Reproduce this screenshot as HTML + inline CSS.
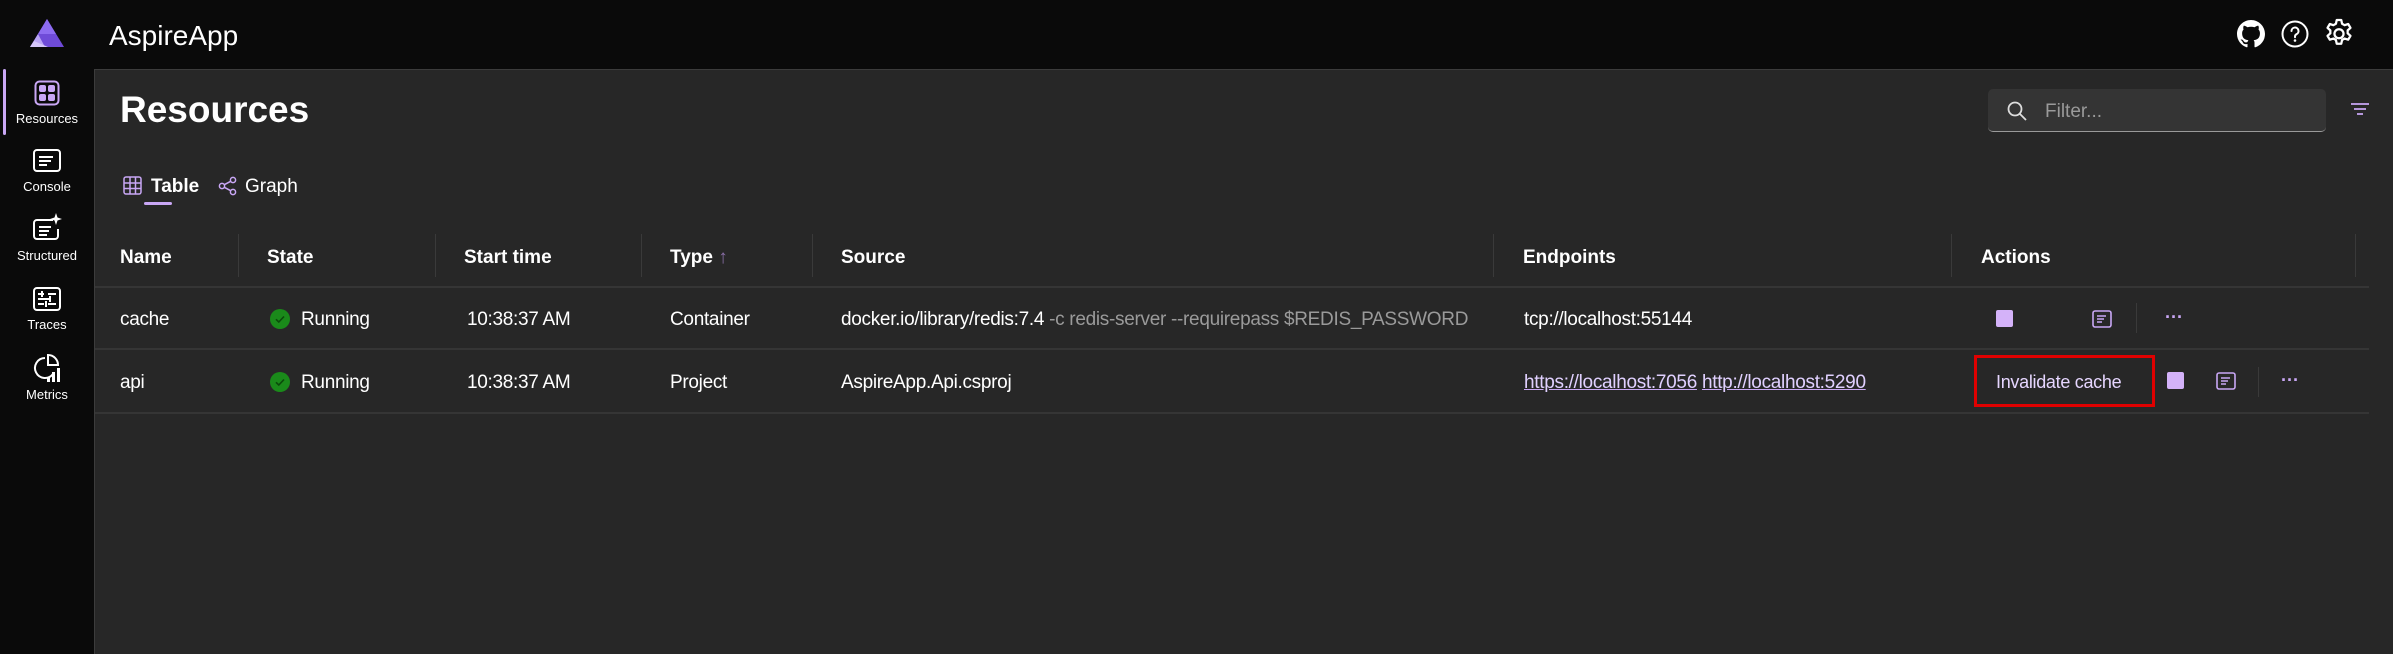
<!DOCTYPE html>
<html><head><meta charset="utf-8"><style>
*{margin:0;padding:0;box-sizing:border-box}
body{width:2393px;height:654px;background:#0a0a0a;font-family:"Liberation Sans",sans-serif;color:#fff;position:relative;overflow:hidden}
.a{position:absolute}
.content{left:94px;top:69px;right:0;bottom:0;background:#272727;border-top:1px solid #3c3c3c;border-left:1px solid #3c3c3c}
.nav{width:94px;text-align:center;font-size:13px;color:#fff;left:0}
.hd{font-weight:bold;font-size:19px;top:247px}
.cell{font-size:19px;letter-spacing:-0.3px}
.sep{width:1px;background:#3a3a3a;top:234px;height:43px}
.hr{left:95px;width:2274px;height:2px;background:#353535}
.lnk{color:#e0d0ff;text-decoration:underline;text-decoration-color:#c9a7f5}
.stop{width:17px;height:17px;background:#d4b2f9;border-radius:2px}
</style></head><body>
<div class="a content"></div>
<svg class="a" style="left:28px;top:17px" width="38" height="32" viewBox="0 0 38 32"><polygon points="19,2 36,30 2,30" fill="#6f4bd8"/><polygon points="19,2 28,17 10,17" fill="#8d6cf0"/><polygon points="10,17 17,30 2,30" fill="#b9a4f5"/><polygon points="6,24 20,30 2,30" fill="#d5c6fa"/></svg>
<div class="a" style="left:109px;top:20px;font-size:28px">AspireApp</div>
<svg class="a" style="left:2237px;top:20px" width="28" height="28" viewBox="0 0 16 16"><path fill="#fff" d="M8 0C3.58 0 0 3.58 0 8c0 3.54 2.29 6.53 5.47 7.59.4.07.55-.17.55-.38 0-.19-.01-.82-.01-1.49-2.01.37-2.53-.49-2.69-.94-.09-.23-.48-.94-.82-1.13-.28-.15-.68-.52-.01-.53.63-.01 1.08.58 1.23.82.72 1.21 1.87.87 2.33.66.07-.52.28-.87.51-1.07-1.78-.2-3.64-.89-3.64-3.95 0-.87.31-1.59.82-2.15-.08-.2-.36-1.02.08-2.12 0 0 .67-.21 2.2.82.64-.18 1.32-.27 2-.27.68 0 1.36.09 2 .27 1.53-1.04 2.2-.82 2.2-.82.44 1.1.16 1.92.08 2.12.51.56.82 1.27.82 2.15 0 3.07-1.87 3.75-3.65 3.95.29.25.54.73.54 1.48 0 1.07-.01 1.93-.01 2.2 0 .21.15.46.55.38A8.013 8.013 0 0 0 16 8c0-4.42-3.58-8-8-8z"/></svg>
<svg class="a" style="left:2281px;top:20px" width="28" height="28" viewBox="0 0 28 28"><circle cx="14" cy="14" r="12.5" fill="none" stroke="#fff" stroke-width="2"/><path d="M10.5 11a3.5 3.5 0 1 1 5 3.2c-1 .5-1.5 1.2-1.5 2.3v.8" fill="none" stroke="#fff" stroke-width="2" stroke-linecap="round"/><circle cx="14" cy="20.5" r="1.3" fill="#fff"/></svg>
<svg class="a" style="left:2323px;top:18px" width="32" height="32" viewBox="0 0 24 24"><path fill="none" stroke="#fff" stroke-width="1.7" stroke-linejoin="round" d="M10.3 1.5h3.4l.6 2.8 1.9 1.1 2.7-.9 1.7 2.9-2.1 1.9v2.2l2.1 1.9-1.7 2.9-2.7-.9-1.9 1.1-.6 2.8h-3.4l-.6-2.8-1.9-1.1-2.7.9-1.7-2.9 2.1-1.9V9.3L3.4 7.4l1.7-2.9 2.7.9 1.9-1.1z"/><circle cx="12" cy="11.8" r="3.4" fill="none" stroke="#fff" stroke-width="1.7"/></svg>
<div class="a" style="left:3px;top:69px;width:3px;height:66px;background:#c9a7f5;border-radius:2px"></div>
<svg class="a" style="left:34px;top:80px" width="26" height="26" viewBox="0 0 26 26"><rect x="1.5" y="1.5" width="23" height="23" rx="4" fill="none" stroke="#c9a7f5" stroke-width="2"/><rect x="5" y="5" width="7" height="7" rx="2" fill="#c9a7f5"/><rect x="14" y="5" width="7" height="7" rx="2" fill="#c9a7f5"/><rect x="5" y="14" width="7" height="7" rx="2" fill="#c9a7f5"/><rect x="14" y="14" width="7" height="7" rx="2" fill="#c9a7f5"/></svg>
<div class="a nav" style="top:111px">Resources</div>
<svg class="a" style="left:33px;top:149px" width="28" height="23" viewBox="0 0 28 23"><rect x="1" y="1" width="26" height="21" rx="3" fill="none" stroke="#fff" stroke-width="2"/><path d="M6 8h14M6 12h12M6 16h8" stroke="#fff" stroke-width="2"/></svg>
<div class="a nav" style="top:179px">Console</div>
<svg class="a" style="left:33px;top:213px" width="30" height="28" viewBox="0 0 30 28"><path d="M20 7H4a3 3 0 0 0-3 3v13a3 3 0 0 0 3 3h18a3 3 0 0 0 3-3v-7" fill="none" stroke="#fff" stroke-width="2"/><path d="M6 14h12M6 18h10M6 22h8" stroke="#fff" stroke-width="2"/><path d="M23 0l1.5 4.5L29 6l-4.5 1.5L23 12l-1.5-4.5L17 6l4.5-1.5z" fill="#fff"/></svg>
<div class="a nav" style="top:248px">Structured</div>
<svg class="a" style="left:33px;top:287px" width="28" height="24" viewBox="0 0 28 24"><rect x="1" y="1" width="26" height="22" rx="3" fill="none" stroke="#fff" stroke-width="2"/><path d="M5 7h6M15 7h8M9 4v6M5 12h12M17 9v6M5 17h6M15 17h8M13 14v6" stroke="#fff" stroke-width="2"/></svg>
<div class="a nav" style="top:317px">Traces</div>
<svg class="a" style="left:33px;top:353px" width="30" height="30" viewBox="0 0 30 30"><path d="M12 5a10 10 0 1 0 8 16" fill="none" stroke="#fff" stroke-width="2"/><path d="M15 2a10 10 0 0 1 10 10H15z" fill="none" stroke="#fff" stroke-width="2"/><rect x="14" y="24" width="3" height="5" fill="#fff"/><rect x="19" y="19" width="3" height="10" fill="#fff"/><rect x="24" y="15" width="3" height="14" fill="#fff"/></svg>
<div class="a nav" style="top:387px">Metrics</div>
<div class="a" style="left:120px;top:89px;font-size:37px;font-weight:bold">Resources</div>
<div class="a" style="left:1988px;top:89px;width:338px;height:43px;background:#343434;border-radius:5px;border-bottom:1px solid #9a9a9a"></div>
<svg class="a" style="left:2006px;top:100px" width="22" height="22" viewBox="0 0 22 22"><circle cx="9" cy="9" r="6.5" fill="none" stroke="#ddd" stroke-width="1.8"/><path d="M14 14l6 6" stroke="#ddd" stroke-width="1.8"/></svg>
<div class="a" style="left:2045px;top:101px;font-size:19px;color:#9a9a9a">Filter...</div>
<svg class="a" style="left:2350px;top:102px" width="20" height="16" viewBox="0 0 20 16"><path d="M1 2h18M4 7h12M7 12h6" stroke="#c9a7f5" stroke-width="1.8"/></svg>
<svg class="a" style="left:123px;top:176px" width="19" height="19" viewBox="0 0 19 19"><rect x="1" y="1" width="17" height="17" rx="2" fill="none" stroke="#c9a7f5" stroke-width="1.5"/><path d="M1 7h17M1 12.5h17M7 1v17M12.5 1v17" stroke="#c9a7f5" stroke-width="1.5"/></svg>
<div class="a" style="left:151px;top:176px;font-size:19px;font-weight:bold">Table</div>
<div class="a" style="left:144px;top:202px;width:28px;height:3px;background:#c9a7f5;border-radius:2px"></div>
<svg class="a" style="left:218px;top:176px" width="19" height="20" viewBox="0 0 19 20"><circle cx="4" cy="10" r="2.6" fill="none" stroke="#c9a7f5" stroke-width="1.5"/><circle cx="15" cy="4" r="2.6" fill="none" stroke="#c9a7f5" stroke-width="1.5"/><circle cx="15" cy="16" r="2.6" fill="none" stroke="#c9a7f5" stroke-width="1.5"/><path d="M6.3 8.7l6.4-3.4M6.3 11.3l6.4 3.4" stroke="#c9a7f5" stroke-width="1.5"/></svg>
<div class="a" style="left:245px;top:176px;font-size:19px">Graph</div>
<div class="a hd" style="left:120px">Name</div>
<div class="a sep" style="left:238px"></div>
<div class="a hd" style="left:267px">State</div>
<div class="a sep" style="left:435px"></div>
<div class="a hd" style="left:464px">Start time</div>
<div class="a sep" style="left:641px"></div>
<div class="a hd" style="left:670px">Type <span style="font-weight:normal;color:#8a6fa8">↑</span></div>
<div class="a sep" style="left:812px"></div>
<div class="a hd" style="left:841px">Source</div>
<div class="a sep" style="left:1493px"></div>
<div class="a hd" style="left:1523px">Endpoints</div>
<div class="a sep" style="left:1951px"></div>
<div class="a hd" style="left:1981px">Actions</div>
<div class="a sep" style="left:2355px"></div>
<div class="a hr" style="top:286px"></div>
<div class="a hr" style="top:348px"></div>
<div class="a hr" style="top:412px"></div>
<div class="a cell" style="left:120px;top:309px">cache</div>
<svg class="a" style="left:270px;top:309px" width="20" height="20" viewBox="0 0 20 20"><circle cx="10" cy="10" r="10" fill="#1a8a1a"/><path d="M6 10.3l2.8 2.7L14 7.5" fill="none" stroke="#0b4a0b" stroke-width="1.6"/></svg>
<div class="a cell" style="left:301px;top:309px">Running</div>
<div class="a cell" style="left:467px;top:309px">10:38:37 AM</div>
<div class="a cell" style="left:670px;top:309px">Container</div>
<div class="a cell" style="left:841px;top:309px;white-space:nowrap">docker.io/library/redis:7.4 <span style="color:#9a9a9a">-c redis-server --requirepass $REDIS_PASSWORD</span></div>
<div class="a cell" style="left:1524px;top:309px">tcp://localhost:55144</div>
<div class="a stop" style="left:1996px;top:310px"></div>
<svg class="a" style="left:2092px;top:309px" width="20" height="20" viewBox="0 0 20 20"><rect x="1" y="2" width="18" height="16" rx="2" fill="none" stroke="#c9a7f5" stroke-width="1.6"/><path d="M5 7h9M5 10h7M5 13h5" stroke="#c9a7f5" stroke-width="1.6"/></svg>
<div class="a" style="left:2136px;top:303px;width:1px;height:30px;background:#3a3a3a"></div>
<div class="a" style="left:2165px;top:307px;font-size:18px;color:#c9a7f5;font-weight:bold">···</div>
<div class="a cell" style="left:120px;top:372px">api</div>
<svg class="a" style="left:270px;top:372px" width="20" height="20" viewBox="0 0 20 20"><circle cx="10" cy="10" r="10" fill="#1a8a1a"/><path d="M6 10.3l2.8 2.7L14 7.5" fill="none" stroke="#0b4a0b" stroke-width="1.6"/></svg>
<div class="a cell" style="left:301px;top:372px">Running</div>
<div class="a cell" style="left:467px;top:372px">10:38:37 AM</div>
<div class="a cell" style="left:670px;top:372px">Project</div>
<div class="a cell" style="left:841px;top:372px">AspireApp.Api.csproj</div>
<div class="a cell" style="left:1524px;top:372px;white-space:nowrap"><span class="lnk">https://localhost:7056</span> <span class="lnk">http://localhost:5290</span></div>
<div class="a" style="left:1974px;top:355px;width:181px;height:52px;border:3px solid #e00000"></div>
<div class="a cell" style="left:1996px;top:372px;color:#e6d6ff;font-size:18px">Invalidate cache</div>
<div class="a stop" style="left:2167px;top:372px"></div>
<svg class="a" style="left:2216px;top:371px" width="20" height="20" viewBox="0 0 20 20"><rect x="1" y="2" width="18" height="16" rx="2" fill="none" stroke="#c9a7f5" stroke-width="1.6"/><path d="M5 7h9M5 10h7M5 13h5" stroke="#c9a7f5" stroke-width="1.6"/></svg>
<div class="a" style="left:2258px;top:367px;width:1px;height:30px;background:#3a3a3a"></div>
<div class="a" style="left:2281px;top:370px;font-size:18px;color:#c9a7f5;font-weight:bold">···</div>
</body></html>
